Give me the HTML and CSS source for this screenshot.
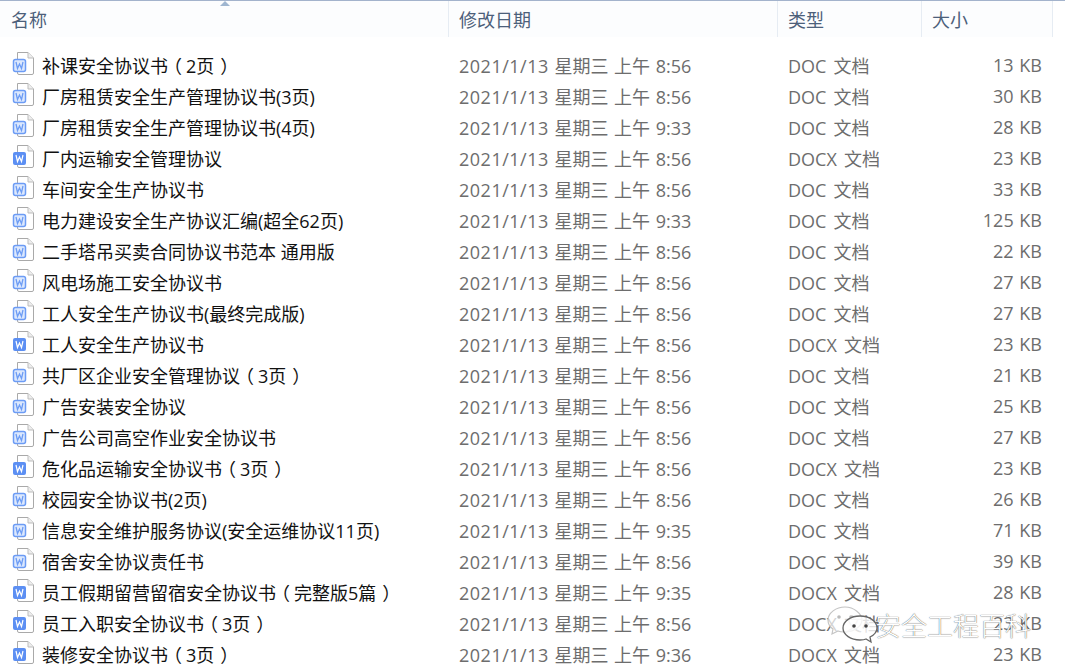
FILE: index.html
```html
<!DOCTYPE html>
<html lang="zh-CN">
<head>
    <meta charset="UTF-8">
    <title>安全协议</title>
    <link rel="stylesheet" href="styles.css">
</head>
<body>
    <svg class="defs" width="0" height="0">
        <symbol id="page" viewBox="0 0 24 25">
            <path d="M5.5 1.500H16L21.500 7V22a1.500 1.500 0 0 1-1.500 1.500H7A1.500 1.500 0 0 1 5.500 22z" fill="#fff" stroke="#a9a9a9"/>
            <path d="M16 1.500V7H21.500" fill="#eee" stroke="#bdbdbd"/>
        </symbol>
        <symbol id="doc" viewBox="0 0 24 25">
            <use href="#page"/>
            <rect x="1.500" y="8.500" width="12" height="12" rx="2" fill="#dce8fd" stroke="#6c9cf5" stroke-width="1.500"/>
            <path d="M4 11l1.500 6.500 2-4.500 2 4.500L11 11" fill="none" stroke="#6c9cf5" stroke-width="1.300"/>
        </symbol>
        <symbol id="docx" viewBox="0 0 24 25">
            <use href="#page"/>
            <rect x="1" y="8" width="13" height="13" rx="2" fill="#5c8ff3"/>
            <path d="M4 11l1.500 6.500 2-4.500 2 4.500L11 11" fill="none" stroke="#fff" stroke-width="1.200"/>
        </symbol>
    </svg>

    <div class="header">
        <div class="sort-arrow"></div>
        <div class="head-cell col-name">名称</div>
        <div class="head-cell col-date">修改日期</div>
        <div class="head-cell col-type">类型</div>
        <div class="head-cell col-size">大小</div>
        <div class="head-end"></div>
    </div>

    <div class="list" id="list"></div>

    <div class="watermark">
        <svg class="wechat" width="54" height="38" viewBox="0 0 54 38">
            <path d="M19 1C10 1 2 7 2 14c0 4 2 7 5 9l-1 5 6-3c2 1 5 1 7 1 9 0 17-6 17-12S28 1 19 1z" fill="#fff" fill-opacity=".7" stroke="#c4c4c4" stroke-width="1.200"/>
            <circle cx="13" cy="11" r="1.800" fill="#bbb"/>
            <circle cx="25" cy="11" r="1.800" fill="#bbb"/>
            <path d="M34 10c-9 0-17 5-17 12s8 12 17 12c2 0 4 0 6-1l5 3-1-5c4-2 7-5 7-9 0-7-8-12-17-12z" fill="#fff" fill-opacity=".8" stroke="#666" stroke-width="1.300"/>
            <circle cx="28" cy="20" r="1.800" fill="#444"/>
            <circle cx="40" cy="20" r="1.800" fill="#444"/>
        </svg>
        <span class="wm-text">安全工程百科</span>
    </div>

    <script>
        // name, date, type, size
        const files = [
            ['补课安全协议书（2页）', '8:56', 'doc', 13],
            ['厂房租赁安全生产管理协议书(3页)', '8:56', 'doc', 30],
            ['厂房租赁安全生产管理协议书(4页)', '9:33', 'doc', 28],
            ['厂内运输安全管理协议', '8:56', 'docx', 23],
            ['车间安全生产协议书', '8:56', 'doc', 33],
            ['电力建设安全生产协议汇编(超全62页)', '9:33', 'doc', 125],
            ['二手塔吊买卖合同协议书范本 通用版', '8:56', 'doc', 22],
            ['风电场施工安全协议书', '8:56', 'doc', 27],
            ['工人安全生产协议书(最终完成版)', '8:56', 'doc', 27],
            ['工人安全生产协议书', '8:56', 'docx', 23],
            ['共厂区企业安全管理协议（3页）', '8:56', 'doc', 21],
            ['广告安装安全协议', '8:56', 'doc', 25],
            ['广告公司高空作业安全协议书', '8:56', 'doc', 27],
            ['危化品运输安全协议书（3页）', '8:56', 'docx', 23],
            ['校园安全协议书(2页)', '8:56', 'doc', 26],
            ['信息安全维护服务协议(安全运维协议11页)', '9:35', 'doc', 71],
            ['宿舍安全协议责任书', '8:56', 'doc', 39],
            ['员工假期留营留宿安全协议书（完整版5篇）', '9:35', 'docx', 28],
            ['员工入职安全协议书（3页）', '8:56', 'docx', 23],
            ['装修安全协议书（3页）', '9:36', 'docx', 23]
        ];

        // full width brackets sit mid-cell in the original font
        function brackets(name) {
            return name.replace('（', '<span class="open">（</span>').replace('）', '<span class="close">）</span>');
        }

        const list = document.getElementById('list');
        files.forEach(function(f) {
            const row = document.createElement('div');
            row.className = 'row';
            row.innerHTML =
                '<div class="cell col-name"><svg class="icon"><use href="#' + f[2] + '"/></svg><span>' + brackets(f[0]) + '</span></div>' +
                '<div class="cell col-date"><span class="day">2021/1/13</span> 星期三 上午 ' + f[1] + '</div>' +
                '<div class="cell col-type">' + f[2].toUpperCase() + ' 文档</div>' +
                '<div class="cell col-size">' + f[3] + ' KB</div>';
            list.appendChild(row);
        });
    </script>
</body>
</html>
```

FILE: styles.css
```css
html, body {
    height: 100%;
}
body {
    margin: 0;
    overflow: hidden;
    position: relative;
    background-color: #fff;
    font-family: "Open Sans", "Noto Sans CJK SC", sans-serif;
    font-size: 18px;
    word-spacing: 1px;
}
.defs {
    display: none;
}
.header {
    display: grid;
    grid-template-columns: 449px 329px 144px 131px 1fr;
    height: 36px;
    position: relative;
    border-top: 1px solid #a3b3cc;
    background-color: #fcfdfe;
    color: #4c607a;
}
.sort-arrow {
    position: absolute;
    top: 0;
    left: 220px;
    border-left: 5px solid transparent;
    border-right: 5px solid transparent;
    border-bottom: 5px solid #9fb6d0;
}
.head-cell {
    display: flex;
    align-items: center;
    padding-top: 2px;
    padding-left: 10px;
    border-right: 1px solid #e6ecf3;
    line-height: 24px;
}
.header .col-name {
    padding-left: 11px;
}
.head-end {
    background-color: #fff;
}
.list {
    padding-top: 12px;
}
.row {
    display: grid;
    grid-template-columns: 449px 329px 144px 131px;
    height: 31px;
    align-items: center;
    color: #6d6d6d;
}
.cell {
    white-space: nowrap;
    padding-left: 10px;
}
.row .col-name {
    display: flex;
    align-items: center;
    padding-left: 12px;
    color: #111;
    word-spacing: 0;
}
.row .col-type {
    word-spacing: 2.5px;
}
.row .col-size {
    padding-left: 0;
    padding-right: 11px;
    text-align: right;
}
.day {
    letter-spacing: 0.5px;
}
.open {
    margin-left: -4px;
    margin-right: 4px;
}
.close {
    margin-left: 6px;
    margin-right: -6px;
}
.icon {
    width: 24px;
    height: 25px;
    margin-right: 6px;
    margin-bottom: 2px;
    flex: none;
}
.watermark {
    position: absolute;
    left: 826px;
    top: 606px;
    display: flex;
    align-items: center;
}
.wechat {
    margin-right: -5px;
}
.wm-text {
    font-size: 26px;
    font-weight: 300;
    color: #fff;
    text-shadow: 0 0 1px #222;
    word-spacing: 0;
}
```
